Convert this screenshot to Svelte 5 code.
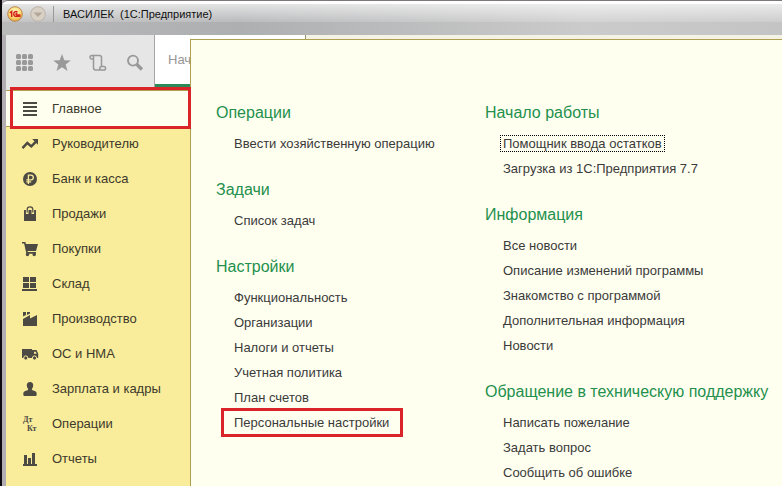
<script lang="ts">
	type Link = { label: string; focused?: boolean; marked?: boolean };
	type Group = { title: string; links: Link[] };

	const sections = [
		{ icon: "menu", label: "Главное" },
		{ icon: "trend", label: "Руководителю" },
		{ icon: "ruble", label: "Банк и касса" },
		{ icon: "bag", label: "Продажи" },
		{ icon: "cart", label: "Покупки" },
		{ icon: "stock", label: "Склад" },
		{ icon: "factory", label: "Производство" },
		{ icon: "truck", label: "ОС и НМА" },
		{ icon: "person", label: "Зарплата и кадры" },
		{ icon: "dtkt", label: "Операции" },
		{ icon: "chart", label: "Отчеты" }
	];

	const columns: Group[][] = [
		[
			{ title: "Операции", links: [{ label: "Ввести хозяйственную операцию" }] },
			{ title: "Задачи", links: [{ label: "Список задач" }] },
			{
				title: "Настройки",
				links: [
					{ label: "Функциональность" },
					{ label: "Организации" },
					{ label: "Налоги и отчеты" },
					{ label: "Учетная политика" },
					{ label: "План счетов" },
					{ label: "Персональные настройки", marked: true }
				]
			}
		],
		[
			{
				title: "Начало работы",
				links: [
					{ label: "Помощник ввода остатков", focused: true },
					{ label: "Загрузка из 1С:Предприятия 7.7" }
				]
			},
			{
				title: "Информация",
				links: [
					{ label: "Все новости" },
					{ label: "Описание изменений программы" },
					{ label: "Знакомство с программой" },
					{ label: "Дополнительная информация" },
					{ label: "Новости" }
				]
			},
			{
				title: "Обращение в техническую поддержку",
				links: [
					{ label: "Написать пожелание" },
					{ label: "Задать вопрос" },
					{ label: "Сообщить об ошибке" }
				]
			}
		]
	];

	let active = $state("Главное");
</script>

<div class="window">
	<header class="titlebar">
		<button class="orb" aria-label="1С">
			<svg width="16" height="16" viewBox="0 0 16 16">
				<defs>
					<radialGradient id="orb-fill" cx="50%" cy="35%" r="65%">
						<stop offset="0" stop-color="#fffbd0" />
						<stop offset="0.6" stop-color="#fbdc74" />
						<stop offset="1" stop-color="#e9a23b" />
					</radialGradient>
				</defs>
				<circle cx="8" cy="8" r="7.3" fill="url(#orb-fill)" stroke="#b9864e" />
				<path d="M2.8 6.8 4.7 5.5V11M10.5 6.2C9 4.9 6.8 5.8 6.8 8s1.7 2.7 3 2.3H13.5M10.2 7.8C9 7 8.4 8.9 9.8 8.9H13.5" fill="none" stroke="#d3231b" stroke-width="1.5" />
			</svg>
		</button>
		<button class="orb" aria-label="Меню окна">
			<svg width="16" height="16" viewBox="0 0 16 16">
				<circle cx="8" cy="8" r="7.3" fill="#d9d1c6" stroke="#bcb2a6" />
				<path d="M3.5 6.5h9L8 11z" fill="#b3a797" />
			</svg>
		</button>
		<span class="divider"></span>
		<h1>ВАСИЛЕК&nbsp; (1С:Предприятие)</h1>
	</header>

	<div class="workspace">
		<div class="topbar">
			<div class="tools">
				<button aria-label="Все функции">
					<svg width="18" height="18" viewBox="0 0 18 18" fill="#999">
						{#each [3, 9, 15] as y}
							{#each [3, 9, 15] as x}
								<rect x={x - 3} y={y - 3} width="5" height="5" rx="1.5" />
							{/each}
						{/each}
					</svg>
				</button>
				<button aria-label="Избранное">
					<svg width="18" height="18" viewBox="0 0 18 18" fill="#999">
						<path d="M9 0l2.3 6.3 6.5.2-5.1 4 1.8 6.500L9 13.200l-5.500 3.800 1.800-6.500-5.100-4 6.500-.2z" />
					</svg>
				</button>
				<button aria-label="История">
					<svg width="18" height="18" viewBox="0 0 18 18" fill="none" stroke="#999" stroke-width="1.5">
						<path d="M4.500 5H2.500Q1 5 1 3.300T2.700 1.600H10.500Q12.500 1.600 12.500 3.600V12.400M4.500 3.300V13.800Q4.500 16 6.700 16H14.800Q16.600 16 16.600 14.200T14.800 12.400H12.500Q10.800 12.400 10.800 14.200T12.500 16M2.700 1.600Q4.500 1.600 4.500 3.300V5" />
					</svg>
				</button>
				<button aria-label="Поиск">
					<svg width="18" height="18" viewBox="0 0 18 18" fill="none" stroke="#999">
						<circle cx="7" cy="6.6" r="5" stroke-width="1.9" />
						<path d="M10.7 10.3l5.200 5.200" stroke-width="3.400" />
					</svg>
				</button>
			</div>
			<button class="tab">Начальная страница</button>
			<div class="tab-rest"></div>
		</div>

		<nav class="sections" aria-label="Разделы">
			{#each sections as section (section.label)}
				<button
					class="section"
					class:active={section.label === active}
					onclick={() => (active = section.label)}
				>
					<svg width="18" height="16" viewBox="0 0 18 16" fill="#4c4a42" aria-hidden="true">
						{#if section.icon === "menu"}
							<path d="M2 1h14v2H2zM2 5h14v2H2zM2 9h14v2H2zM2 13h14v2H2z" />
						{:else if section.icon === "trend"}
							<path d="M1.5 12.2 6.3 7l4 3.4L15 5.6" fill="none" stroke="#4c4a42" stroke-width="2.5" />
							<path d="M11.2 3H17v5.8z" />
						{:else if section.icon === "ruble"}
							<circle cx="9" cy="8" r="7" />
							<path d="M7.4 13V4.2H10a2.3 2.3 0 0 1 0 4.6H5.3M5.3 10.8H10.2" fill="none" stroke="#f9ec9b" stroke-width="1.3" />
						{:else if section.icon === "bag"}
							<path d="M3 4h12v11H3z" />
							<path d="M6.2 8V3.5Q6.2.8 9 .8T11.8 3.5V8" fill="none" stroke="#f9ec9b" stroke-width="2.6" />
							<path d="M6.2 6.5V3.5Q6.2.8 9 .8T11.8 3.5V6.5" fill="none" stroke="#4c4a42" stroke-width="1.2" />
						{:else if section.icon === "cart"}
							<path d="M1 1h3.4l.5 2H17l-2 7H6.5l.3 1H15v1.700H5.400L3.100 2.600H1z" />
							<circle cx="6.5" cy="13.5" r="1.7" />
							<circle cx="13.2" cy="13.5" r="1.7" />
						{:else if section.icon === "stock"}
							<path d="M2 1h6v5H2zM9 1h6v5H9zM2 7h6v5H2zM9 7h6v5H9zM1 13h15v2H1z" />
						{:else if section.icon === "factory"}
							<path d="M2 1h3v3L2 5.500zM6 1h3v1.500L6 4zM2 8l7-4v3.500l7-3.500v11H2z" />
						{:else if section.icon === "truck"}
							<path d="M1 3h10v9H1zM11 4h4.500l1.700 3.500V12H11z" />
							<path d="M13 5.800h1.700l1 2H13z" fill="#f9ec9b" />
							<circle cx="4.8" cy="12" r="2.1" stroke="#f9ec9b" />
							<circle cx="13.5" cy="12" r="2.1" stroke="#f9ec9b" />
						{:else if section.icon === "person"}
							<path d="M9 1c2.2 0 3.2 1.3 3.2 3.3 0 1.5-.6 2.8-1.4 3.6l.2 1.1 2.7 1c1.5.5 2 1.4 2 3.2 0 1.3-.5 1.8-1.7 1.8H4c-1.2 0-1.7-.5-1.7-1.8 0-1.8.5-2.7 2-3.2L7 9l.2-1.1C6.4 7.1 5.8 5.8 5.8 4.3 5.8 2.3 6.8 1 9 1z" />
						{:else if section.icon === "dtkt"}
							<text class="glyph" x="2" y="6">Дт</text>
							<text class="glyph" x="6" y="15">Кт</text>
						{:else}
							<path d="M3 4h3v10H3zM7 7h3v7H7zM11 2h3v12h-3zM2 13h14v2H2z" />
						{/if}
					</svg>
					<span>{section.label}</span>
				</button>
			{/each}
		</nav>

		<main class="panel">
			{#each columns as groups}
				<div class="column">
					{#each groups as group (group.title)}
						<section>
							<h2>{group.title}</h2>
							<ul>
								{#each group.links as link (link.label)}
									<li>
										<a href="#top" class:focused={link.focused} class:marked={link.marked}>{link.label}</a>
									</li>
								{/each}
							</ul>
						</section>
					{/each}
				</div>
			{/each}
		</main>
	</div>
</div>

<style>
	:global(body) {
		margin: 0;
	}

	.window {
		--olive: #aea04f;
		--cream: #fffff0;
		--red: #d9252a;
		box-sizing: border-box;
		min-height: 100vh;
		display: flex;
		flex-direction: column;
		overflow: hidden;
		border-left: 2px solid #0d0b0d;
		background: #b1adb2;
		color: #3a3a3a;
		font-family: "Liberation Sans", Arial, sans-serif;
		font-size: 13px;
	}

	button {
		padding: 0;
		border: 0;
		background: none;
		color: inherit;
		font: inherit;
		cursor: pointer;
	}

	svg {
		display: block;
		flex: none;
	}

	.titlebar {
		box-sizing: border-box;
		height: 35px;
		padding: 0 5px 9px;
		display: flex;
		align-items: center;
		gap: 7px;
		border-top: 1px solid #7c787b;
		border-top-left-radius: 6px;
		background:
			linear-gradient(#fff 0 3px, transparent 3px),
			linear-gradient(rgba(255, 255, 255, 0.65) 3px, rgba(255, 255, 255, 0.15) 21px, transparent 21px),
			linear-gradient(90deg, #b9b9ba, #aeafb1 30%, #cbcbcb 75%, #c4c4c5);
	}

	.divider {
		width: 1px;
		height: 16px;
		background: #98979a;
	}

	h1 {
		margin: 0 0 0 2px;
		color: #111;
		font-size: 11px;
		font-weight: 400;
		white-space: nowrap;
	}

	.workspace {
		flex: 1;
		margin-left: 4px;
		display: grid;
		grid-template-columns: 184px 1fr;
		grid-template-rows: 56px 1fr;
	}

	.topbar {
		grid-area: 1 / 1 / 2 / 3;
		display: flex;
		border-bottom: 1px solid var(--olive);
		background: #e6e6e6;
	}

	.tools {
		box-sizing: border-box;
		width: 149px;
		padding: 0 10px;
		display: flex;
		align-items: center;
		justify-content: space-between;
		border-right: 1px solid #a5a5a5;
	}

	.tab {
		box-sizing: border-box;
		width: 151px;
		margin-bottom: 3px;
		padding-left: 13px;
		overflow: hidden;
		border-right: 1px solid #9a9468;
		border-bottom: 3px solid #2b8a57;
		background: #fff;
		color: #969696;
		text-align: left;
		white-space: nowrap;
	}

	.tab-rest {
		flex: 1;
		background: #f4f2e4;
	}

	.sections {
		grid-area: 2 / 1;
		background: #f9ec9b;
	}

	.section {
		position: relative;
		box-sizing: border-box;
		width: 100%;
		height: 35px;
		padding-left: 15px;
		display: flex;
		align-items: center;
		gap: 13px;
		color: #3d3a2b;
		text-align: left;
		white-space: nowrap;
	}

	.section.active {
		background: var(--cream);
		box-shadow: 0 1px var(--olive);
		z-index: 2;
	}

	/* highlight frame sits over the row and its neighbours */
	.section.active::after {
		content: "";
		position: absolute;
		inset: -4px -1px -3px 4px;
		border: 3px solid var(--red);
	}

	.glyph {
		font-family: "Liberation Serif", serif;
		font-size: 8px;
		font-weight: 700;
	}

	.panel {
		grid-area: 1 / 2 / 3 / 3;
		margin-top: 4px;
		padding: 60px 0 0 25px;
		display: grid;
		grid-template-columns: 269px 1fr;
		border-top: 1px solid var(--olive);
		border-left: 1px solid var(--olive);
		background: var(--cream);
	}

	.column {
		display: flex;
		flex-direction: column;
		gap: 21px;
	}

	h2 {
		margin: 0 0 6px;
		color: #23904d;
		font-size: 16px;
		font-weight: 400;
		line-height: 25px;
		white-space: nowrap;
	}

	ul {
		margin: 0;
		padding: 0 0 0 18px;
		list-style: none;
	}

	li {
		height: 25px;
		display: flex;
		align-items: center;
	}

	a {
		position: relative;
		color: inherit;
		line-height: 15px;
		text-decoration: none;
		white-space: nowrap;
	}

	.focused {
		margin: 0 -2px;
		padding: 0 2px;
		outline: 1px dotted #000;
	}

	.marked::after {
		content: "";
		position: absolute;
		inset: -7px -14px -7px -13px;
		border: 3px solid var(--red);
	}
</style>
